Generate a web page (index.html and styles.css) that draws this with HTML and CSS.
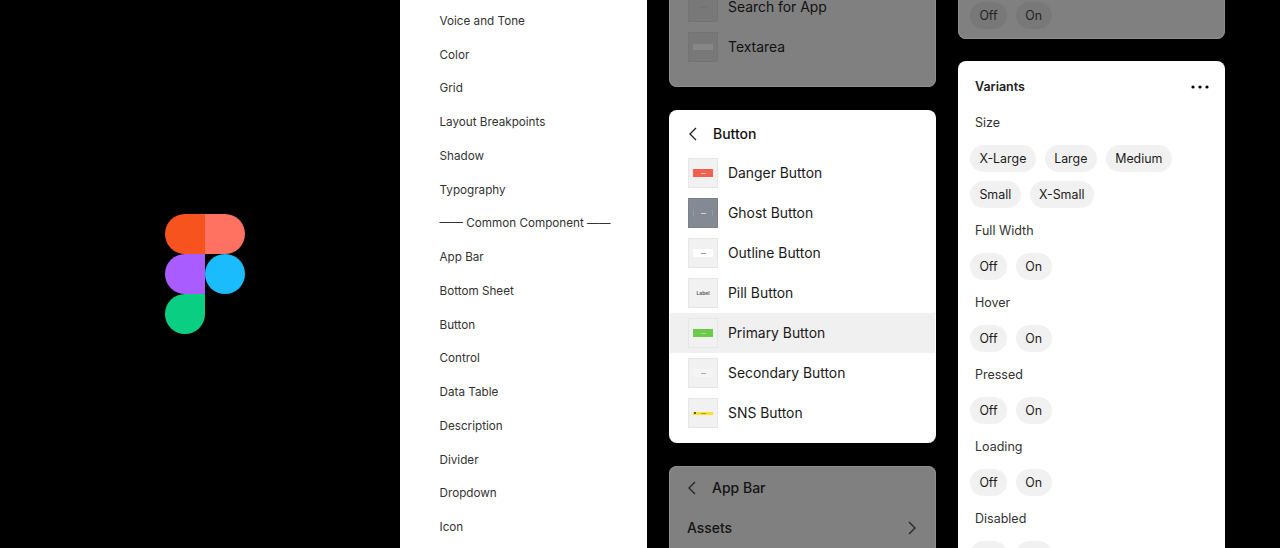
FILE: index.html
```html
<!DOCTYPE html>
<html lang="en">
<head>
  <meta charset="UTF-8">
  <title>Figma Design System</title>
  <link rel="stylesheet" href="styles.css">
</head>
<body>
  <div class="page">

    <!-- Logo -->
    <div class="logo-pane">
      <svg class="logo" width="80" height="120" viewBox="0 0 80 120">
        <path fill="#f7531f" d="M40 0H20a20 20 0 0 0 0 40h20z"/>
        <path fill="#ff7262" d="M40 0h20a20 20 0 0 1 0 40H40z"/>
        <path fill="#a95cff" d="M40 40H20a20 20 0 0 0 0 40h20z"/>
        <circle fill="#1abcfe" cx="60" cy="60" r="20"/>
        <path fill="#0acf83" d="M20 80h20v20a20 20 0 1 1-20-20z"/>
      </svg>
    </div>

    <!-- Page list -->
    <nav class="nav">
      <div class="nav-item">Voice and Tone</div>
      <div class="nav-item">Color</div>
      <div class="nav-item">Grid</div>
      <div class="nav-item">Layout Breakpoints</div>
      <div class="nav-item">Shadow</div>
      <div class="nav-item">Typography</div>
      <div class="nav-item">—— Common Component ——</div>
      <div class="nav-item">App Bar</div>
      <div class="nav-item">Bottom Sheet</div>
      <div class="nav-item">Button</div>
      <div class="nav-item">Control</div>
      <div class="nav-item">Data Table</div>
      <div class="nav-item">Description</div>
      <div class="nav-item">Divider</div>
      <div class="nav-item">Dropdown</div>
      <div class="nav-item">Icon</div>
    </nav>

    <!-- Assets column -->
    <div class="col col-assets">
      <div class="card card-dim card-list-end">
        <div class="row"><span class="thumb"><i class="bar bar-dim-thin"></i></span>Search for App</div>
        <div class="row"><span class="thumb"><i class="bar bar-dim"></i></span>Textarea</div>
      </div>

      <div class="card card-button">
        <div class="card-head">
          <svg class="chev" width="10" height="14" viewBox="0 0 10 14"><path d="M8 1 2 7l6 6"/></svg>
          <span class="card-title">Button</span>
        </div>
        <div class="row"><span class="thumb"><i class="bar bar-danger"><b class="tiny"></b></i></span>Danger Button</div>
        <div class="row"><span class="thumb thumb-ghost"><i class="bar bar-ghost"><b class="tiny"></b></i></span>Ghost Button</div>
        <div class="row"><span class="thumb"><i class="bar bar-outline"><b class="tiny tiny-dark"></b></i></span>Outline Button</div>
        <div class="row"><span class="thumb"><em class="pill-label">Label</em></span>Pill Button</div>
        <div class="row row-active"><span class="thumb"><i class="bar bar-primary"><b class="tiny tiny-green"></b></i></span>Primary Button</div>
        <div class="row"><span class="thumb"><i class="bar bar-secondary"><b class="tiny tiny-grey"></b></i></span>Secondary Button</div>
        <div class="row"><span class="thumb"><i class="bar bar-sns"><b class="sns-dot"></b><b class="sns-label"></b></i></span>SNS Button</div>
      </div>

      <div class="card card-dim card-appbar">
        <div class="card-head card-head-dim">
          <svg class="chev" width="10" height="14" viewBox="0 0 10 14"><path d="M8 1 2 7l6 6"/></svg>
          <span class="card-title-dim">App Bar</span>
        </div>
        <div class="assets-row">
          <span>Assets</span>
          <svg class="chev" width="10" height="14" viewBox="0 0 10 14"><path d="m2 1 6 6-6 6"/></svg>
        </div>
      </div>
    </div>

    <!-- Variants column -->
    <div class="col col-variants">
      <div class="card card-dim card-chips-end">
        <div class="chips"><span class="chip">Off</span><span class="chip">On</span></div>
      </div>

      <div class="card card-variants">
        <div class="variants-head">
          <span class="variants-title">Variants</span>
          <svg width="18" height="4" viewBox="0 0 18 4"><circle cx="2" cy="2" r="1.6"/><circle cx="9" cy="2" r="1.6"/><circle cx="16" cy="2" r="1.6"/></svg>
        </div>
        <div class="prop">Size</div>
        <div class="chips"><span class="chip">X-Large</span><span class="chip">Large</span><span class="chip">Medium</span></div>
        <div class="chips"><span class="chip">Small</span><span class="chip">X-Small</span></div>
        <div class="prop">Full Width</div>
        <div class="chips"><span class="chip">Off</span><span class="chip">On</span></div>
        <div class="prop">Hover</div>
        <div class="chips"><span class="chip">Off</span><span class="chip">On</span></div>
        <div class="prop">Pressed</div>
        <div class="chips"><span class="chip">Off</span><span class="chip">On</span></div>
        <div class="prop">Loading</div>
        <div class="chips"><span class="chip">Off</span><span class="chip">On</span></div>
        <div class="prop">Disabled</div>
        <div class="chips"><span class="chip">Off</span><span class="chip">On</span></div>
      </div>
    </div>

  </div>
</body>
</html>
```

FILE: styles.css
```css
html, body {
  margin: 0;
  height: 100%;
  background: #000;
  overflow: hidden;
}
body {
  font-family: Inter, "Liberation Sans", sans-serif;
  color: #1c1c1c;
}
.page {
  display: flex;
  height: 548px;
  overflow: hidden;
}

/* Logo */
.logo-pane {
  width: 400px;
  flex: none;
  display: flex;
  align-items: center;
  padding-left: 165px;
  box-sizing: border-box;
}
.logo {
  display: block;
}

/* Page list */
.nav {
  width: 247px;
  flex: none;
  background: #fff;
  padding: 4.8px 0 0 39.5px;
  box-sizing: border-box;
  overflow: hidden;
}
.nav-item {
  height: 33.75px;
  line-height: 33.75px;
  font-size: 11.7px;
  color: #333;
  white-space: nowrap;
}

/* Columns */
.col {
  width: 267px;
  flex: none;
  margin-left: 22px;
  display: flex;
  flex-direction: column;
  gap: 22px;
}
.col-assets {
  margin-top: -13px;
  gap: 23px;
}
.col-variants {
  margin-top: -8px;
}

/* Cards */
.card {
  flex: none;
  background: #fff;
  border-radius: 8px;
  box-sizing: border-box;
}
.card-dim {
  background: #808080;
  box-shadow: inset 0 0 0 1px #8e8e8e;
}
.card-list-end {
  padding-bottom: 20px;
}
.card-chips-end {
  padding: 5.5px 12px 0;
  height: 47px;
}
.card-button {
  height: 333px;
  padding: 4px 1px 0;
}
.card-appbar {
  height: 120px;
}
.card-head {
  display: flex;
  align-items: center;
  height: 39px;
  padding-left: 18px;
  gap: 15px;
}
.card-title {
  font-size: 14px;
  font-weight: 500;
  color: #111;
}
.card-head-dim {
  height: 43px;
  padding-left: 18px;
}
.card-title-dim {
  font-size: 14px;
  font-weight: 500;
  color: #141414;
}
.chev {
  fill: none;
  stroke: #222;
  stroke-width: 1.3;
  flex: none;
}
.assets-row {
  display: flex;
  align-items: center;
  justify-content: space-between;
  height: 38px;
  padding: 0 19px 0 18px;
  font-size: 13.9px;
  font-weight: 500;
  color: #141414;
}

/* List rows */
.row {
  display: flex;
  align-items: center;
  gap: 10px;
  height: 40px;
  padding-left: 18px;
  font-size: 13.9px;
  color: #1a1a1a;
}
.card-dim .row {
  padding-left: 19px;
  color: #111;
}
.row-active {
  background: #f0f0f0;
}
.thumb {
  width: 30px;
  height: 30px;
  flex: none;
  display: flex;
  align-items: center;
  justify-content: center;
  background: #f1f1f1;
  border: 1px solid #e6e6e6;
  box-sizing: border-box;
}
.card-dim .thumb {
  background: #787878;
  border-color: #747474;
}
.thumb-ghost {
  background: #838a94;
  border-color: #7a808a;
}
.bar {
  display: flex;
  align-items: center;
  justify-content: center;
  width: 20px;
  height: 8px;
  box-sizing: border-box;
}
.bar-dim {
  background: #878787;
  height: 6px;
}
.bar-dim-thin {
  background: #727272;
  height: 1px;
  width: 8px;
}
.bar-danger {
  background: #f2604f;
}
.bar-ghost {
  border: 1px solid #949aa3;
  border-top-color: transparent;
  border-bottom-color: transparent;
}
.bar-outline {
  background: #fff;
}
.bar-primary {
  background: #6ccb49;
}
.bar-secondary {
  background: #f5f5f5;
}
.bar-sns {
  background: #f6e12f;
  height: 3px;
  justify-content: flex-start;
  gap: 3px;
}
.tiny {
  width: 5px;
  height: 1px;
  background: #f8c8c0;
}
.tiny-dark {
  background: #999;
}
.tiny-green {
  background: #a4dd90;
}
.tiny-grey {
  background: #aaa;
}
.sns-dot {
  width: 2px;
  height: 2px;
  margin-left: 1px;
  background: #6b5d10;
}
.sns-label {
  width: 5px;
  height: 1px;
  margin-left: 2px;
  background: #b5a428;
}
.pill-label {
  font-size: 5px;
  font-style: normal;
  font-weight: 600;
  color: #555;
}

/* Variants */
.card-variants {
  height: 560px;
  padding: 0 12px;
}
.variants-head {
  display: flex;
  align-items: center;
  justify-content: space-between;
  height: 51px;
  padding: 0 4px 0 5px;
}
.variants-title {
  font-size: 12.5px;
  font-weight: 600;
  color: #222;
}
.prop {
  height: 22px;
  line-height: 22px;
  padding-left: 5px;
  font-size: 12.5px;
  color: #333;
}
.chips {
  display: flex;
  gap: 9px;
  height: 36px;
  align-items: center;
}
.chip {
  height: 27px;
  line-height: 27px;
  padding: 0 9.4px;
  border-radius: 14px;
  background: #f1f1f1;
  font-size: 12.4px;
  color: #1c1c1c;
}
.card-dim .chip {
  background: #787878;
  color: #222;
}
.prop + .chips {
  margin-top: 6px;
}
.chips + .prop {
  margin-top: 8px;
}
```
